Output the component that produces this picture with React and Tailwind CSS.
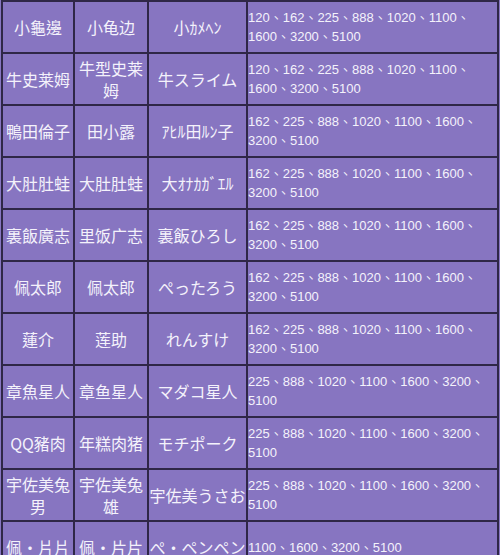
import React from 'react'

const A = '120、162、225、888、1020、1100、1600、3200、5100'
const B = '162、225、888、1020、1100、1600、3200、5100'
const C = '225、888、1020、1100、1600、3200、5100'
const D = '1100、1600、3200、5100'

const ROWS = [
  ['小龜邊', '小龟边', '小ｶﾒﾍﾝ', A],
  ['牛史莱姆', '牛型史莱姆', '牛スライム', A],
  ['鴨田倫子', '田小露', 'ｱﾋﾙ田ﾙﾝ子', B],
  ['大肚肚蛙', '大肚肚蛙', '大ｵﾅｶｶﾞｴﾙ', B],
  ['裏飯廣志', '里饭广志', '裏飯ひろし', B],
  ['佩太郎', '佩太郎', 'ぺったろう', B],
  ['蓮介', '莲助', 'れんすけ', B],
  ['章魚星人', '章鱼星人', 'マダコ星人', C],
  ['QQ豬肉', '年糕肉猪', 'モチポーク', C],
  ['宇佐美兔男', '宇佐美兔雄', '宇佐美うさお', C],
  ['佩・片片', '佩·片片', 'ぺ・ペンペン', D],
]

const name = 'h-[50px] bg-[#8775c1] text-[#f4f2fb] text-[16px] leading-[22px] flex items-center justify-center text-center'

export default function App() {
  return (
    <div className="w-[500px] h-[555px] overflow-hidden bg-[#8775c1]">
      <div className="ml-[1px] w-[498px] grid grid-cols-[70px_72px_97px_249px] gap-[2px] p-[2px] bg-[#2f2747]">
        {ROWS.map((r, i) => (
          <React.Fragment key={i}>
            <div className={`${name} px-0.5 font-['Noto_Sans_CJK_TC',sans-serif]`}>{r[0]}</div>
            <div className={`${name} px-0.5 font-['Noto_Sans_CJK_SC',sans-serif]`}>{r[1]}</div>
            <div className={`${name} whitespace-nowrap font-['Noto_Sans_CJK_JP',sans-serif]`}>{r[2]}</div>
            <div className="h-[50px] bg-[#8775c1] text-[#f4f2fb] text-[13px] leading-[19px] flex items-center font-['Liberation_Sans','Noto_Sans_CJK_TC',sans-serif]">
              <span>{r[3]}</span>
            </div>
          </React.Fragment>
        ))}
      </div>
    </div>
  )
}
